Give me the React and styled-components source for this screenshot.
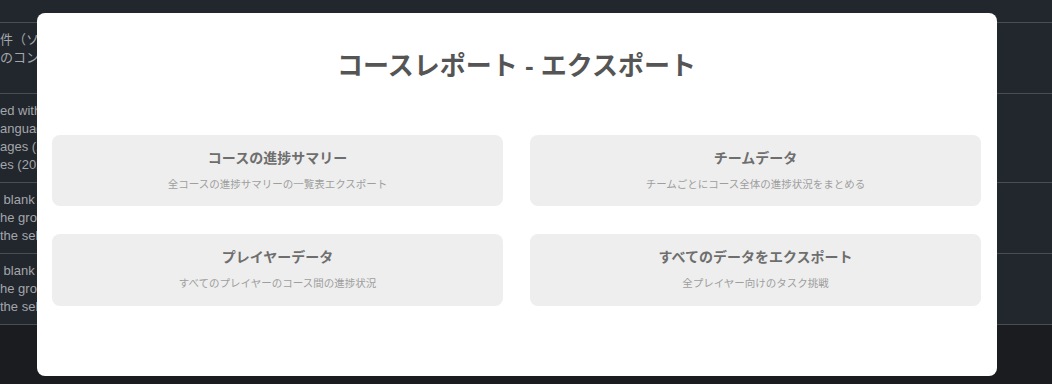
import React from "react";
import styled, { createGlobalStyle } from "styled-components";

const Global = createGlobalStyle`
  html, body { margin: 0; padding: 0; }
  body {
    background: #1b1c1f;
    font-family: "Liberation Sans", "Noto Sans CJK JP", sans-serif;
    overflow: hidden;
  }
`;

const Page = styled.div`
  width: 1052px;
  height: 384px;
  background: #1b1c1f;
`;

const Table = styled.div`
  background: #22262d;
  display: flex;
  flex-direction: column;
`;

const HeadStrip = styled.div`
  height: 23px;
  border-bottom: 1px solid #4a4d53;
  box-sizing: border-box;
`;

const Row = styled.div`
  border-bottom: 1px solid #4a4d53;
  padding: 8px 0;
`;

const Line = styled.div`
  font-size: 13px;
  line-height: 18px;
  height: 18px;
  color: #a3a6ab;
  white-space: pre;
  overflow: hidden;
`;

const Overlay = styled.div`
  position: fixed;
  inset: 0;
  display: flex;
  align-items: flex-start;
  justify-content: flex-start;
  padding: 13px 0 0 37px;
`;

const Modal = styled.div`
  width: 960px;
  height: 363px;
  box-sizing: border-box;
  background: #ffffff;
  border-radius: 8px;
  padding: 36px 16px 0 15px;
  display: flex;
  flex-direction: column;
`;

const Title = styled.h2`
  margin: 0;
  text-align: center;
  font-size: 26px;
  line-height: 34px;
  font-weight: 700;
  color: #555555;
  font-family: "Liberation Sans", "Noto Sans CJK JP", sans-serif;
`;

const Grid = styled.div`
  margin-top: 52px;
  display: grid;
  grid-template-columns: 1fr 1fr;
  column-gap: 27px;
  row-gap: 28px;
`;

const Card = styled.button`
  all: unset;
  box-sizing: border-box;
  height: ${(p) => p.$h}px;
  background: #eeeeee;
  border-radius: 8px;
  padding: 13px 0 0;
  display: flex;
  flex-direction: column;
  align-items: center;
  cursor: pointer;
`;

const CardTitle = styled.div`
  font-size: 14px;
  line-height: 20px;
  font-weight: 700;
  color: #6e6e6e;
`;

const CardDesc = styled.div`
  margin-top: 9px;
  font-size: 10.5px;
  line-height: 14px;
  color: #9e9e9e;
`;

const rows = [
  ["件（ソート順）の設定", "のコンテンツ", " "],
  ["ed with the course", "anguages supported", "ages (2023)", "es (2024)"],
  [" blank page is shown", "he group is selected", "the selected item"],
  [" blank page is shown", "he group is selected", "the selected item"],
];

const cards = [
  { t: "コースの進捗サマリー", d: "全コースの進捗サマリーの一覧表エクスポート", h: 71 },
  { t: "チームデータ", d: "チームごとにコース全体の進捗状況をまとめる", h: 71 },
  { t: "プレイヤーデータ", d: "すべてのプレイヤーのコース間の進捗状況", h: 72 },
  { t: "すべてのデータをエクスポート", d: "全プレイヤー向けのタスク挑戦", h: 72 },
];

export default function App() {
  return (
    <Page>
      <Global />
      <Table>
        <HeadStrip />
        {rows.map((r, i) => (
          <Row key={i}>
            {r.map((l, j) => (
              <Line key={j}>{l}</Line>
            ))}
          </Row>
        ))}
      </Table>
      <Overlay>
        <Modal>
          <Title>コースレポート - エクスポート</Title>
          <Grid>
            {cards.map((c) => (
              <Card key={c.t} $h={c.h}>
                <CardTitle>{c.t}</CardTitle>
                <CardDesc>{c.d}</CardDesc>
              </Card>
            ))}
          </Grid>
        </Modal>
      </Overlay>
    </Page>
  );
}
